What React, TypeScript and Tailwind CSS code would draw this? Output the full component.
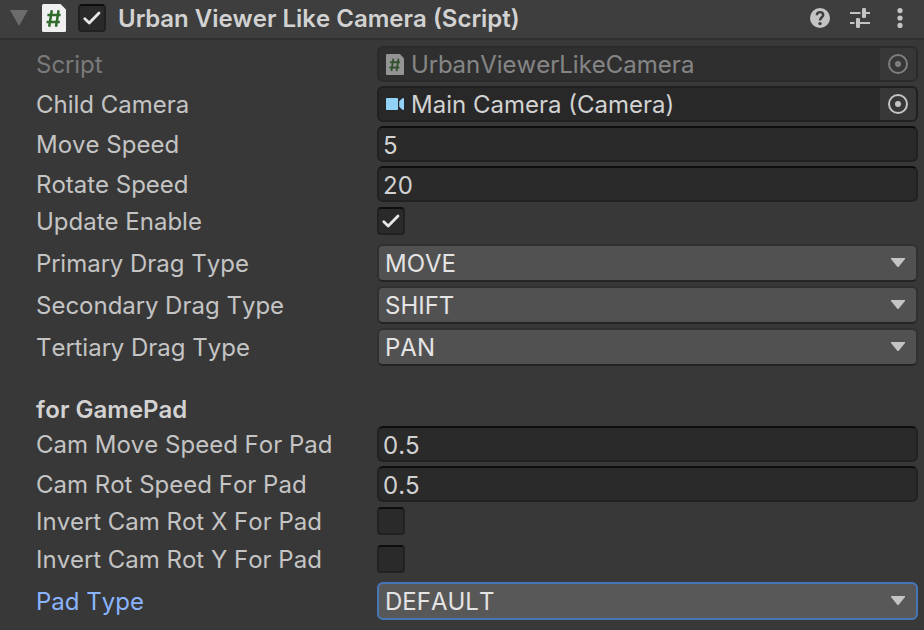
import { useId, useState } from "react";
import type { ReactNode } from "react";

function ScriptIcon({ className }: { className: string }) {
  return (
    <svg viewBox="0 0 24 28" preserveAspectRatio="none" className={className} aria-hidden="true">
      <path d="M1.5 0H18.5L24 5.5V26.5Q24 28 22.5 28H1.5Q0 28 0 26.5V1.5Q0 0 1.5 0Z" fill="#f0f0f0" />
      <path
        d="M9.8 6.2L7.2 22.8M16.6 6.2L14 22.8M5.4 11H18.6M4.6 18H17.8"
        fill="none"
        stroke="#2f6b2a"
        strokeWidth="2.5"
      />
    </svg>
  );
}

function CameraIcon() {
  return (
    <svg viewBox="0 0 18 12" className="h-3 w-[18px] shrink-0" aria-hidden="true">
      <rect width="12" height="12" rx="0.8" fill="#91d3f8" />
      <path d="M13.2 3.2L16.4 0.2Q18 -0.4 18 1V11Q18 12.4 16.4 11.8L13.2 8.8Z" fill="#91d3f8" />
    </svg>
  );
}

function TargetIcon() {
  return (
    <svg viewBox="0 0 20 20" className="size-5" aria-hidden="true">
      <circle cx="10" cy="10" r="9" fill="none" stroke="#c4c4c4" strokeWidth="2" />
      <circle cx="10" cy="10" r="3" fill="#c4c4c4" />
    </svg>
  );
}

function HelpIcon() {
  return (
    <svg viewBox="0 0 20 20" className="size-5" aria-hidden="true">
      <circle cx="10" cy="10" r="10" fill="#c4c4c4" />
      <path
        d="M6.8 7.2C6.8 5.2 8.2 4.1 10 4.1S13.2 5.3 13.2 7C13.2 9.2 10 9.4 10 12.4"
        fill="none"
        stroke="#3e3e3e"
        strokeWidth="2.4"
      />
      <circle cx="10" cy="15.6" r="1.7" fill="#3e3e3e" />
    </svg>
  );
}

function PresetIcon() {
  return (
    <svg viewBox="0 0 20 20" className="size-5" aria-hidden="true">
      <g fill="#c4c4c4">
        <rect x="0" y="4" width="10.5" height="2" />
        <rect x="12" y="0" width="4" height="10" rx="1.2" />
        <rect x="16" y="4" width="4" height="2" />
        <rect x="0" y="14" width="4.5" height="2" />
        <rect x="6" y="10" width="4" height="10" rx="1.2" />
        <rect x="10" y="14" width="10" height="2" />
      </g>
    </svg>
  );
}

function MenuIcon() {
  return (
    <svg viewBox="0 0 6 20" className="h-5 w-1.5" aria-hidden="true">
      <g fill="#c4c4c4">
        <circle cx="3" cy="2.6" r="2.6" />
        <circle cx="3" cy="10" r="2.6" />
        <circle cx="3" cy="17.4" r="2.6" />
      </g>
    </svg>
  );
}

function Toggle({ id, label, initial }: { id?: string; label?: string; initial: boolean }) {
  const [checked, setChecked] = useState(initial);
  return (
    <span className="relative block size-7 shrink-0">
      <input
        id={id}
        aria-label={label}
        type="checkbox"
        checked={checked}
        onChange={(e) => setChecked(e.target.checked)}
        className="peer block size-7 appearance-none rounded border-2 border-[#212121] border-t-[#0d0d0d] bg-[#2a2a2a] outline-none"
      />
      <svg
        viewBox="0 0 28 28"
        className="pointer-events-none absolute inset-0 hidden size-7 peer-checked:block"
        aria-hidden="true"
      >
        <path
          d="M6.8 14.8L11.2 19L21 9"
          fill="none"
          stroke="#e8e8e8"
          strokeWidth="2.8"
          strokeLinecap="round"
          strokeLinejoin="round"
        />
      </svg>
    </span>
  );
}

function Row({ id, label, tone, children }: { id: string; label: string; tone?: string; children: ReactNode }) {
  return (
    <div className="flex items-center">
      <label htmlFor={id} className={`w-[341px] shrink-0 whitespace-nowrap pt-0.5 leading-6 ${tone ?? "text-[#c4c4c4]"}`}>
        {label}
      </label>
      {children}
    </div>
  );
}

function ObjectField({ label, value, icon, disabled }: { label: string; value: string; icon: ReactNode; disabled?: boolean }) {
  const id = useId();
  return (
    <Row id={id} label={label} tone={disabled ? "text-[#7a7a7a]" : undefined}>
      <div
        className={`flex h-9 min-w-0 flex-1 items-center overflow-hidden rounded-md border-2 border-[#202020] bg-[#282828] pl-[7px] ${disabled ? "opacity-50" : ""}`}
      >
        {icon}
        <input
          id={id}
          readOnly
          disabled={disabled}
          value={value}
          className="ml-[7px] h-8 min-w-0 flex-1 bg-transparent pt-0.5 text-[#d2d2d2] outline-none"
        />
        <button
          type="button"
          disabled={disabled}
          aria-label={`Select ${label}`}
          className="flex h-8 w-9 shrink-0 items-center justify-center bg-[#373737]"
        >
          <TargetIcon />
        </button>
      </div>
    </Row>
  );
}

function NumberField({ label, initial }: { label: string; initial: string }) {
  const id = useId();
  const [value, setValue] = useState(initial);
  return (
    <Row id={id} label={label}>
      <input
        id={id}
        inputMode="decimal"
        value={value}
        onChange={(e) => setValue(e.target.value)}
        className="h-9 min-w-0 flex-1 rounded-md border-2 border-[#212121] border-t-[#0d0d0d] bg-[#2a2a2a] px-1 pt-0.5 text-[#d2d2d2] outline-none"
      />
    </Row>
  );
}

function ToggleField({ label, initial }: { label: string; initial: boolean }) {
  const id = useId();
  return (
    <div className="h-[34px] pt-px">
      <Row id={id} label={label}>
        <Toggle id={id} initial={initial} />
      </Row>
    </div>
  );
}

function SelectField({ label, initial, options, active }: { label: string; initial: string; options: string[]; active?: boolean }) {
  const id = useId();
  const [value, setValue] = useState(initial);
  return (
    <Row id={id} label={label} tone={active ? "text-[#8bb4ff]" : undefined}>
      <div className="relative min-w-0 flex-1">
        <select
          id={id}
          value={value}
          onChange={(e) => setValue(e.target.value)}
          className={`block h-[38px] w-full appearance-none rounded-md border-2 pl-1.5 pr-9 pt-0.5 text-[#e4e4e4] outline-none ${
            active ? "border-[#4676b8] bg-[#585858]" : "border-[#303030] border-b-[#242424] bg-[#515151]"
          }`}
        >
          {options.map((option) => (
            <option key={option}>{option}</option>
          ))}
        </select>
        <svg
          viewBox="0 0 14 9"
          className="pointer-events-none absolute right-[13px] top-3.5 h-[9px] w-3.5"
          aria-hidden="true"
        >
          <path d="M0 0H14V1L7.5 9H6.5L0 1Z" fill="#c4c4c4" />
        </svg>
      </div>
    </Row>
  );
}

const dragTypes = ["MOVE", "SHIFT", "PAN"];

export default function App() {
  return (
    <main className="min-h-screen bg-[#383838] font-['Inter',sans-serif] text-2xl [font-kerning:none]">
      <header className="flex h-10 items-center border-b-2 border-[#303030] bg-[#3e3e3e] pb-0.5 pl-2.5 pr-[21px]">
        <button type="button" aria-label="Collapse component" className="mr-3.5 shrink-0">
          <svg viewBox="0 0 18 16" className="block h-4 w-[18px]" aria-hidden="true">
            <path d="M0 0H18L9 16Z" fill="#6c6c6c" />
          </svg>
        </button>
        <ScriptIcon className="mr-3 h-7 w-6 shrink-0" />
        <Toggle label="Component enabled" initial />
        <h1 className="ml-3 min-w-0 flex-1 truncate pt-0.5 font-semibold leading-8 text-[#d2d2d2]">
          Urban Viewer Like Camera (Script)
        </h1>
        <div className="flex shrink-0 items-center gap-5">
          <button type="button" aria-label="Help">
            <HelpIcon />
          </button>
          <button type="button" aria-label="Presets">
            <PresetIcon />
          </button>
          <button type="button" aria-label="More options" className="ml-[7px]">
            <MenuIcon />
          </button>
        </div>
      </header>
      <form className="flex flex-col gap-1 pl-9 pr-1.5 pt-1.5">
        <ObjectField
          label="Script"
          value="UrbanViewerLikeCamera"
          icon={<ScriptIcon className="h-[21px] w-[18px] shrink-0" />}
          disabled
        />
        <ObjectField label="Child Camera" value="Main Camera (Camera)" icon={<CameraIcon />} />
        <NumberField label="Move Speed" initial="5" />
        <NumberField label="Rotate Speed" initial="20" />
        <ToggleField label="Update Enable" initial />
        <SelectField label="Primary Drag Type" initial="MOVE" options={dragTypes} />
        <SelectField label="Secondary Drag Type" initial="SHIFT" options={dragTypes} />
        <SelectField label="Tertiary Drag Type" initial="PAN" options={dragTypes} />
        <h2 className="pt-7 font-semibold leading-6 text-[#d2d2d2]">for GamePad</h2>
        <NumberField label="Cam Move Speed For Pad" initial="0.5" />
        <NumberField label="Cam Rot Speed For Pad" initial="0.5" />
        <ToggleField label="Invert Cam Rot X For Pad" initial={false} />
        <ToggleField label="Invert Cam Rot Y For Pad" initial={false} />
        <SelectField label="Pad Type" initial="DEFAULT" options={["DEFAULT"]} active />
      </form>
    </main>
  );
}
